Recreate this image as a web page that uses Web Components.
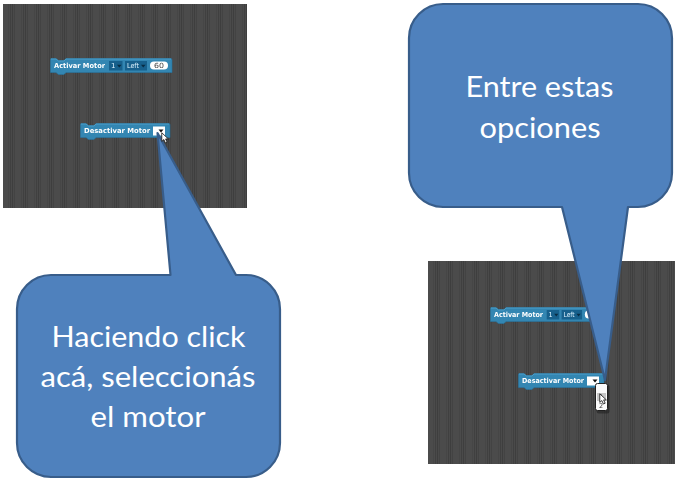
<!DOCTYPE html>
<html lang="es"><head><meta charset="utf-8"><title>Motores</title>
<style>html,body{margin:0;background:#fff}</style></head><body>
<slide-canvas>
  <code-stage style="left:3px;top:4px;width:244px;height:204px">
    <motor-block style="left:46.500px;top:54px" width="122" label="Activar Motor" label-width="51" variant="on"></motor-block>
    <motor-block style="left:76.500px;top:119px" width="90" label="Desactivar Motor" label-width="66"></motor-block>
  </code-stage>
  <code-stage style="left:428px;top:261px;width:247px;height:203px">
    <motor-block style="left:62px;top:46px" width="118" label="Activar Motor" label-width="49" variant="on" scale=".93"></motor-block>
    <motor-block style="left:90px;top:112px" width="86" label="Desactivar Motor" label-width="62"></motor-block>
  </code-stage>
  <speech-callout style="left:16px;top:274px;width:265px;height:204px" path="M35 1H154.500L141.500 -141L220 1H230A34 34 0 0 1 264 35V169A34 34 0 0 1 230 203H35A34 34 0 0 1 1 169V35A34 34 0 0 1 35 1Z">
    <callout-line width="192">Haciendo click</callout-line>
    <callout-line width="213">acá, seleccionás</callout-line>
    <callout-line width="113">el motor</callout-line>
  </speech-callout>
  <speech-callout style="left:408px;top:4px;width:264px;height:205px" path="M35 0H230A34 34 0 0 1 264 34V169A34 34 0 0 1 230 203H220L197 376L154 203H35A34 34 0 0 1 1 169V34A34 34 0 0 1 35 0Z">
    <callout-line width="146">Entre estas</callout-line>
    <callout-line width="119">opciones</callout-line>
  </speech-callout>
  <option-menu style="left:595px;top:383px"></option-menu>
  <mouse-pointer style="left:161px;top:132px"></mouse-pointer>
</slide-canvas>
<script>
class Base extends HTMLElement{
  constructor(){super();this.attachShadow({mode:'open'})}
  connectedCallback(){this.shadowRoot.innerHTML=this.view()}
}
const arrow='<path transform="scale(1.1)" d="M.7.7V8.500L2.600 6.900L4 10L5.600 9.300L4.200 6.300H6.700Z" fill="#fff" stroke="#222" stroke-width=".8"/>';
customElements.define('slide-canvas',class extends Base{view(){return `
<style>:host{display:block;position:relative;width:678px;height:481px;overflow:hidden}</style><slot></slot>`}});
customElements.define('code-stage',class extends Base{view(){return `
<style>:host{display:block;position:absolute;overflow:hidden;background:repeating-linear-gradient(90deg,#4b4b4b 0 5px,#464646 5px 6px,#4b4b4b 6px 7px,#404040 7px 8px,#4a4a4a 8px 9px,#3e3e3e 9px 10px,#4a4a4a 10px 11px,#434343 11px 12px,#4b4b4b 12px 13px)}</style><slot></slot>`}});
customElements.define('motor-block',class extends Base{view(){
const w=+this.getAttribute('width'),l=this.getAttribute('label'),lw=+this.getAttribute('label-width'),e=4+lw,s=this.getAttribute('scale')||1;
const on=this.getAttribute('variant')==='on';
return `
<style>:host{display:block;position:absolute;width:${w}px;height:18px;filter:blur(.3px)}svg{display:block;overflow:visible}text{font:bold 7px "DejaVu Sans",sans-serif;fill:#fff}.v{font-weight:400;fill:#def3ff}.n{font-weight:400;fill:#444}</style>
<svg width="${w}" height="18"><path d="M1 .5H6L8.500 2.500H14L16 .5H${w-1}Q${w} .5 ${w} 2V14.500H16L14 16.500H8.500L6 14.500H.5V1Z" fill="#3386b2" stroke="#2673a0" stroke-width=".6"/>
<path d="M1 1H6L8.500 3H14L16 1H${w-1}" fill="none" stroke="#58a9d2" stroke-width=".7"/>
<text x="4" y="10" textLength="${lw}" lengthAdjust="spacingAndGlyphs">${l}</text>
${on?`<g transform="translate(${e} 0) scale(${s} 1)"><rect x="4" y="3" width="13.500" height="9.500" fill="#17608c"/><text class="v" x="6" y="10">1</text><path d="M12 6.800h4.500l-2.250 2.800z" fill="#082c44"/>
<rect x="20" y="3" width="22" height="9.500" fill="#17608c"/><text class="v" x="22" y="10" textLength="12" lengthAdjust="spacingAndGlyphs">Left</text><path d="M36 6.800h4.500l-2.250 2.800z" fill="#082c44"/>
<rect x="45" y="3.500" width="18" height="8" rx="4" fill="#fff"/><text class="n" x="49" y="10" textLength="10" lengthAdjust="spacingAndGlyphs">60</text></g>`
:`<rect x="${e+3}" y="3.500" width="12" height="9" fill="#fff"/><path d="M${e+8.500} 6.500h5l-2.500 3z" fill="#111"/>`}</svg>`}});
customElements.define('speech-callout',class extends Base{view(){return `
<style>:host{display:flex;flex-direction:column;align-items:center;justify-content:center;position:absolute}.shape{position:absolute;inset:0;width:100%;height:100%;overflow:visible}</style>
<svg class="shape"><path d="${this.getAttribute('path')}" fill="#4f81bd" stroke="#385d8a" stroke-width="2.200" stroke-linejoin="round"/></svg><slot></slot>`}});
customElements.define('callout-line',class extends Base{view(){const w=this.getAttribute('width');return `
<style>:host{display:block;position:relative;height:40.300px;width:${w}px}svg{display:block;overflow:visible}text{font:29.500px Lato,sans-serif;fill:#fff}</style>
<svg width="${w}" height="40"><text x="-1.500" y="31" textLength="${+w+2}" lengthAdjust="spacingAndGlyphs">${this.textContent}</text></svg>`}});
customElements.define('option-menu',class extends Base{view(){return `
<style>:host{display:block;position:absolute;width:12px;height:28px;filter:blur(.3px)}svg{display:block;overflow:visible}text{font:6.500px "DejaVu Sans",sans-serif;fill:#333}</style>
<svg width="12" height="28"><rect x="1.500" y="1.500" width="13" height="29" rx="2.500" fill="#222" opacity=".6"/><rect x=".5" y=".5" width="12" height="27" rx="2" fill="#fafafa" stroke="#202020"/><rect x="2" y="10" width="9" height="8" fill="#c6c6c6"/><text x="4" y="16">1</text><text x="4" y="25">2</text><g transform="translate(4 10)">${arrow}</g></svg>`}});
customElements.define('mouse-pointer',class extends Base{view(){return `
<style>:host{display:block;position:absolute;width:9px;height:12px}svg{display:block}</style><svg width="9" height="12">${arrow}</svg>`}});
</script></body></html>
